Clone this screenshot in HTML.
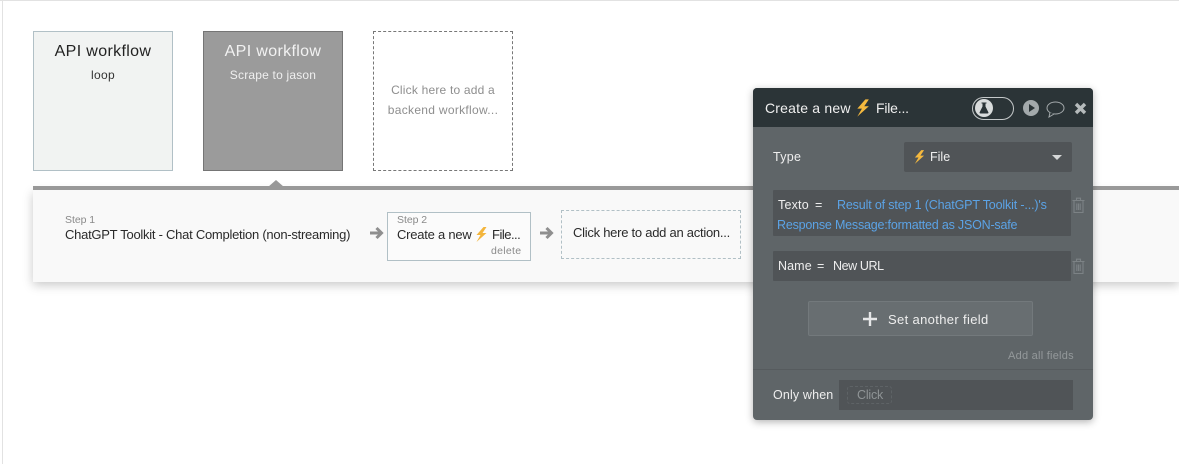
<!DOCTYPE html>
<html>
<head>
<meta charset="utf-8">
<style>
html,body{margin:0;padding:0;background:#fff}
body{width:1179px;height:464px;position:relative;overflow:hidden;font-family:"Liberation Sans",sans-serif}
.a{position:absolute;box-sizing:border-box}
.t{position:absolute;white-space:nowrap;line-height:16px}
.c{text-align:center}
</style>
</head>
<body>
<div class="a" style="left:0;top:0;width:1179px;height:1px;background:#e2e2e2"></div>
<div class="a" style="left:2px;top:0;width:1px;height:464px;background:#e2e2e2"></div>

<div class="a" style="left:33px;top:31px;width:140px;height:140px;background:#f1f3f2;border:1px solid #b1c0c6"></div>
<div class="t c" style="left:33px;top:44px;width:140px;font-size:16px;color:#222;letter-spacing:.35px">API workflow</div>
<div class="t c" style="left:33px;top:67px;width:140px;font-size:12px;color:#333;letter-spacing:.3px">loop</div>

<div class="a" style="left:203px;top:31px;width:140px;height:140px;background:#9b9b9b;border:1px solid #757575"></div>
<div class="t c" style="left:203px;top:44px;width:140px;font-size:16px;color:#f2f2f2;letter-spacing:.35px">API workflow</div>
<div class="t c" style="left:203px;top:67px;width:140px;font-size:12px;color:#efefef;letter-spacing:.2px">Scrape to jason</div>

<div class="a" style="left:373px;top:31px;width:140px;height:140px;background:#fff;border:1px dashed #777"></div>
<div class="t c" style="left:373px;top:82px;width:140px;font-size:12px;color:#8e8e8e;letter-spacing:.2px">Click here to add a</div>
<div class="t c" style="left:373px;top:102px;width:140px;font-size:12px;color:#8e8e8e;letter-spacing:.3px">backend workflow...</div>

<div class="a" style="left:33px;top:190px;width:1146px;height:92px;background:#f9f9f9;box-shadow:0 3px 10px rgba(0,0,0,.22)"></div>
<div class="a" style="left:33px;top:186px;width:1146px;height:4px;background:#999"></div>
<svg class="a" style="left:268px;top:180px" width="16" height="7"><polygon points="0,7 8,0 16,7" fill="#999"/></svg>

<div class="t" style="left:65px;top:212px;font-size:10.5px;color:#8a8a8a;letter-spacing:-.05px">Step 1</div>
<div class="t" style="left:65px;top:227px;font-size:13px;color:#2a2a2a;letter-spacing:-.26px">ChatGPT Toolkit - Chat Completion (non-streaming)</div>

<svg class="a" style="left:369px;top:226px" width="15" height="14" viewBox="0 0 15 14"><path d="M1 7H12M7.5 2L12.5 7L7.5 12" fill="none" stroke="#8f8f8f" stroke-width="3"/></svg>

<div class="a" style="left:387px;top:212px;width:144px;height:49px;border:1px solid #b1c0c6;background:#fbfbfb"></div>
<div class="t" style="left:397px;top:212px;font-size:10.5px;color:#8a8a8a;letter-spacing:-.05px">Step 2</div>
<div class="t" style="left:397px;top:227px;font-size:13px;color:#2a2a2a;letter-spacing:-.23px">Create a new</div>
<svg class="a" style="left:474px;top:227px" width="14" height="15" viewBox="0 0 13 15"><polygon points="9,0 2,8 6,8 2,15 12,6 8,6 12,0" fill="#f3b53c"/></svg>
<div class="t" style="left:492px;top:227px;font-size:13px;color:#2a2a2a;letter-spacing:-.5px">File...</div>
<div class="t" style="left:491px;top:243px;font-size:10.5px;color:#8a8a8a;letter-spacing:.3px">delete</div>

<svg class="a" style="left:539px;top:226px" width="15" height="14" viewBox="0 0 15 14"><path d="M1 7H12M7.5 2L12.5 7L7.5 12" fill="none" stroke="#8f8f8f" stroke-width="3"/></svg>

<div class="a" style="left:561px;top:210px;width:180px;height:49px;border:1px dashed #b1c0c6"></div>
<div class="t" style="left:573px;top:225px;font-size:13px;color:#2a2a2a;letter-spacing:-.26px">Click here to add an action...</div>

<!-- Popup -->
<div class="a" style="left:753px;top:88px;width:340px;height:332px;background:#5f6568;border-radius:4px;box-shadow:0 2px 8px rgba(0,0,0,.3);overflow:hidden">
  <div class="a" style="left:0;top:0;width:340px;height:39px;background:#2b3437"></div>
  <div class="a" style="left:0;top:281px;width:340px;height:1px;background:#565b5e"></div>
</div>
<div class="t" style="left:765px;top:100px;font-size:14px;color:#f0f0f0;letter-spacing:.2px">Create a new</div>
<svg class="a" style="left:855px;top:99px" width="15" height="18" viewBox="0 0 13 15"><polygon points="9,0 2,8 6,8 2,15 12,6 8,6 12,0" fill="#f5b93e"/></svg>
<div class="t" style="left:876px;top:100px;font-size:14px;color:#f0f0f0;letter-spacing:-.2px">File...</div>

<div class="a" style="left:972px;top:97px;width:42px;height:23px;border:1px solid #c5c9ca;border-radius:12px"></div>
<div class="a" style="left:975px;top:99px;width:18px;height:18px;background:#d9dcdc;border-radius:50%"></div>
<svg class="a" style="left:979px;top:102px" width="10" height="12" viewBox="0 0 10 12"><path d="M2.5 .5H7.5V1.5H6.5V4.5L9.5 10.5Q9.5 11.5 8.5 11.5H1.5Q.5 11.5 .5 10.5L3.5 4.5V1.5H2.5Z" fill="#2b3437"/></svg>
<svg class="a" style="left:1023px;top:100px" width="16" height="16" viewBox="0 0 16 16"><circle cx="8" cy="8" r="8" fill="#a3a9ab"/><polygon points="6,4 12,8 6,12" fill="#2b3437"/></svg>
<svg class="a" style="left:1046px;top:100px" width="19" height="18" viewBox="0 0 19 18"><ellipse cx="9.5" cy="8" rx="8.5" ry="6" fill="none" stroke="#a3a9ab" stroke-width="1"/><path d="M4 12.5L3 17L8 14" fill="#2b3437" stroke="#a3a9ab" stroke-width="1"/></svg>
<svg class="a" style="left:1074px;top:102px" width="13" height="13" viewBox="0 0 13 13"><path d="M2 2L11 11M11 2L2 11" stroke="#b5babb" stroke-width="3.4"/></svg>

<div class="t" style="left:773px;top:149px;font-size:12.5px;color:#eee;letter-spacing:.3px">Type</div>
<div class="a" style="left:904px;top:142px;width:168px;height:30px;background:#505457;border-radius:2px"></div>
<svg class="a" style="left:913px;top:150px" width="12" height="14" viewBox="0 0 13 15"><polygon points="9,0 2,8 6,8 2,15 12,6 8,6 12,0" fill="#f5b93e"/></svg>
<div class="t" style="left:930px;top:149px;font-size:12.5px;color:#eee;letter-spacing:0">File</div>
<svg class="a" style="left:1052px;top:155px" width="10" height="6"><polygon points="0,0 10,0 5,5" fill="#d5d7d8"/></svg>

<div class="a" style="left:773px;top:190px;width:298px;height:46px;background:#505457;border-radius:1px"></div>
<div class="t" style="left:778px;top:197px;font-size:12.5px;color:#eee;letter-spacing:.2px">Texto</div>
<div class="t" style="left:815px;top:197px;font-size:12.5px;color:#eee">=</div>
<div class="t" style="left:837px;top:197px;font-size:12.5px;color:#5ba3e6;letter-spacing:-.15px">Result of step 1 (ChatGPT Toolkit -...)'s</div>
<div class="t" style="left:777px;top:217px;font-size:12.5px;color:#5ba3e6;letter-spacing:-.2px">Response Message:formatted as JSON-safe</div>

<div class="a" style="left:773px;top:251px;width:298px;height:30px;background:#505457;border-radius:1px"></div>
<div class="t" style="left:778px;top:258px;font-size:12.5px;color:#eee;letter-spacing:.1px">Name</div>
<div class="t" style="left:817px;top:258px;font-size:12.5px;color:#eee">=</div>
<div class="t" style="left:833px;top:258px;font-size:12.5px;color:#eee;letter-spacing:-.4px">New URL</div>

<svg class="a" style="left:1071px;top:197px" width="15" height="17" viewBox="0 0 15 17"><path d="M1.5 3.5H13.5M5.5 3V1.2H9.5V3M3 4V15.5H12V4M5.8 6.5V13M7.5 6.5V13M9.2 6.5V13" fill="none" stroke="#7c8285" stroke-width="1.1"/></svg>
<svg class="a" style="left:1071px;top:258px" width="15" height="17" viewBox="0 0 15 17"><path d="M1.5 3.5H13.5M5.5 3V1.2H9.5V3M3 4V15.5H12V4M5.8 6.5V13M7.5 6.5V13M9.2 6.5V13" fill="none" stroke="#7c8285" stroke-width="1.1"/></svg>

<div class="a" style="left:808px;top:301px;width:225px;height:35px;background:#686e71;border:1px solid #73797c;border-radius:2px"></div>
<svg class="a" style="left:863px;top:312px" width="14" height="14"><path d="M7 0V14M0 7H14" stroke="#e6e7e8" stroke-width="2.4"/></svg>
<div class="t" style="left:888px;top:312px;font-size:13px;color:#eee;letter-spacing:.35px">Set another field</div>

<div class="t" style="left:1008px;top:348px;font-size:11px;color:#94999b;letter-spacing:.25px">Add all fields</div>

<div class="t" style="left:773px;top:387px;font-size:12.5px;color:#eee;letter-spacing:.15px">Only when</div>
<div class="a" style="left:839px;top:380px;width:234px;height:30px;background:#505457"></div>
<div class="a" style="left:847px;top:386px;width:45px;height:18px;border:1px dashed #5e6366;border-radius:3px"></div>
<div class="t" style="left:857px;top:387px;font-size:12.5px;color:#8f9496;letter-spacing:-.2px">Click</div>
</body>
</html>
